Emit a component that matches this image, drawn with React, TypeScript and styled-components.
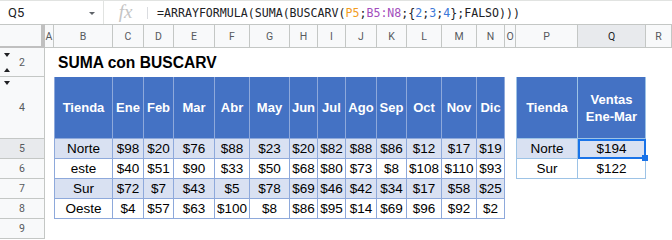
import React from 'react';
import styled, { createGlobalStyle, css } from 'styled-components';

const GlobalStyle = createGlobalStyle`
  html, body { margin: 0; padding: 0; background: #fff; overflow: hidden; }
  #root { width: 672px; height: 240px; }
`;

const COLS = [45, 9, 59, 31, 30, 41, 35, 40, 28, 28, 31, 30, 35, 35, 28, 11, 62, 68, 26];
const LETTERS = 'ABCDEFGHIJKLMNOPQR'.split('');
const MONTHS = ['Ene', 'Feb', 'Mar', 'Abr', 'May', 'Jun', 'Jul', 'Ago', 'Sep', 'Oct', 'Nov', 'Dic'];
const ROWS: [string, ...number[]][] = [
  ['Norte', 98, 20, 76, 88, 23, 20, 82, 88, 86, 12, 17, 19],
  ['este', 40, 51, 90, 33, 50, 68, 80, 73, 8, 108, 110, 93],
  ['Sur', 72, 7, 43, 5, 78, 69, 46, 42, 34, 17, 58, 25],
  ['Oeste', 4, 57, 63, 100, 8, 86, 95, 14, 69, 96, 92, 2],
];
const SUMMARY: [string, number][] = [
  ['Norte', 194],
  ['Sur', 122],
];

const MAIN_LINE = '#8ea9db';
const SIDE_LINE = '#9dc3e6';
const GRID_LINE = '#c4c7c5';

const Frame = styled.div`
  width: 672px;
  height: 240px;
  overflow: hidden;
  display: flex;
  flex-direction: column;
  font-family: Roboto, 'Liberation Sans', sans-serif;
  background: #fff;
`;

const FormulaBar = styled.div`
  flex: 0 0 24px;
  height: 24px;
  display: flex;
  align-items: center;
  box-sizing: border-box;
  border-top: 1px solid #e1e3e1;
`;

const NameBox = styled.div`
  width: 104px;
  height: 100%;
  box-sizing: border-box;
  display: flex;
  align-items: center;
  justify-content: space-between;
  padding: 0 8px 0 8px;
  border-right: 1px solid #e1e3e1;
  font-size: 13px;
  color: #202124;
`;

const Caret = styled.span`
  width: 0;
  height: 0;
  border-left: 3px solid transparent;
  border-right: 3px solid transparent;
  border-top: 3px solid #5f6368;
  margin-top: 2px;
`;

const FxBox = styled.div`
  width: 43px;
  height: 100%;
  display: flex;
  align-items: center;
  justify-content: center;
  font-family: 'Liberation Serif', serif;
  font-style: italic;
  font-size: 19px;
  color: #c4c4c4;
  padding-bottom: 2px;
  box-sizing: border-box;
`;

const Divider = styled.span`
  width: 1px;
  height: 12px;
  background: #dadce0;
`;

const Formula = styled.div`
  margin-left: 9px;
  font-family: 'DejaVu Sans Mono', 'Liberation Mono', monospace;
  font-size: 11.6px;
  color: #202124;
  white-space: nowrap;
`;

const Tok = styled.span<{ $c: string }>`
  color: ${(p) => p.$c};
`;

const Sheet = styled.div`
  display: grid;
  grid-template-columns: ${COLS.map((c) => `${c}px`).join(' ')};
  grid-template-rows: 24px 29px 62px repeat(5, 20px);
`;

const Corner = styled.div`
  background: #f8f9fa;
  box-sizing: border-box;
  border-top: 1px solid ${GRID_LINE};
  border-right: 4px solid #c0c0c0;
  border-bottom: 2px solid #c0c0c0;
`;

const ColHeader = styled.div<{ $active?: boolean }>`
  background: ${(p) => (p.$active ? '#e8eaed' : '#f8f9fa')};
  box-sizing: border-box;
  border-top: 1px solid ${GRID_LINE};
  border-right: 1px solid ${GRID_LINE};
  border-bottom: 1px solid ${GRID_LINE};
  display: flex;
  align-items: center;
  justify-content: center;
  font-size: 10.5px;
  color: ${(p) => (p.$active ? '#202124' : '#575a5e')};
  overflow: hidden;
`;

const RowHeader = styled.div<{ $active?: boolean }>`
  position: relative;
  background: ${(p) => (p.$active ? '#e8eaed' : '#f8f9fa')};
  box-sizing: border-box;
  border-right: 1px solid ${GRID_LINE};
  border-bottom: 1px solid ${GRID_LINE};
  display: flex;
  align-items: center;
  justify-content: center;
  font-size: 10.5px;
  color: #575a5e;
`;

const HiddenMark = styled.span<{ $up?: boolean; $top: number }>`
  position: absolute;
  left: 4px;
  top: ${(p) => p.$top}px;
  width: 0;
  height: 0;
  border-left: 3px solid transparent;
  border-right: 3px solid transparent;
  ${(p) =>
    p.$up
      ? css`border-bottom: 4px solid #202124;`
      : css`border-top: 4px solid #202124;`}
`;

const Blank = styled.div<{ $span?: number }>`
  grid-column: span ${(p) => p.$span ?? 1};
  background: #fff;
`;

const Title = styled.div`
  grid-column: span 17;
  display: flex;
  align-items: center;
  padding: 1px 0 0 4px;
  font-family: 'Liberation Sans', Arial, sans-serif;
  font-weight: 700;
  font-size: 15.6px;
  color: #000;
  white-space: nowrap;
`;

const HeadCell = styled.div<{ $line: string; $first?: boolean }>`
  background: #4472c4;
  box-sizing: border-box;
  border-right: 1px solid ${(p) => p.$line};
  border-bottom: 1px solid ${(p) => p.$line};
  ${(p) => p.$first && css`border-left: 1px solid ${p.$line};`}
  display: flex;
  align-items: center;
  justify-content: center;
  text-align: center;
  font-family: 'Liberation Sans', Arial, sans-serif;
  font-weight: 700;
  font-size: 13px;
  line-height: 17px;
  color: #fff;
  white-space: nowrap;
`;

const DataCell = styled.div<{ $line: string; $band?: boolean; $first?: boolean; $selected?: boolean }>`
  position: relative;
  background: ${(p) => (p.$band ? '#d9e1f2' : '#fff')};
  box-sizing: border-box;
  border-right: 1px solid ${(p) => p.$line};
  border-bottom: 1px solid ${(p) => p.$line};
  ${(p) => p.$first && css`border-left: 1px solid ${p.$line};`}
  display: flex;
  align-items: center;
  justify-content: center;
  font-family: 'Liberation Sans', Arial, sans-serif;
  font-size: 13.5px;
  color: #000;
  white-space: nowrap;
  ${(p) =>
    p.$selected &&
    css`
      &::after {
        content: '';
        position: absolute;
        top: 0;
        left: 0;
        right: -1px;
        bottom: -1px;
        border: 2px solid #1a73e8;
        z-index: 2;
      }
      &::before {
        content: '';
        position: absolute;
        right: -3px;
        bottom: -3px;
        width: 6px;
        height: 6px;
        background: #1a73e8;
        z-index: 3;
      }
    `}
`;

export default function App() {
  return (
    <>
      <GlobalStyle />
      <Frame>
        <FormulaBar>
          <NameBox>
            <span>Q5</span>
            <Caret />
          </NameBox>
          <FxBox>fx</FxBox>
          <Divider />
          <Formula>
            =ARRAYFORMULA(SUMA(BUSCARV(<Tok $c="#f29d1f">P5</Tok>;<Tok $c="#a24dbc">B5:N8</Tok>;{'{'}
            <Tok $c="#3c78d8">2</Tok>;<Tok $c="#3c78d8">3</Tok>;<Tok $c="#3c78d8">4</Tok>
            {'}'};FALSO)))
          </Formula>
        </FormulaBar>

        <Sheet>
          <Corner />
          {LETTERS.map((l) => (
            <ColHeader key={l} $active={l === 'Q'}>
              {l}
            </ColHeader>
          ))}

          <RowHeader>
            2
            <HiddenMark $top={5} />
            <HiddenMark $up $top={20} />
          </RowHeader>
          <Blank />
          <Title>SUMA con BUSCARV</Title>

          <RowHeader>
            4
            <HiddenMark $top={4} />
          </RowHeader>
          <Blank />
          <HeadCell $line={MAIN_LINE} $first>
            Tienda
          </HeadCell>
          {MONTHS.map((m) => (
            <HeadCell key={m} $line={MAIN_LINE}>
              {m}
            </HeadCell>
          ))}
          <Blank />
          <HeadCell $line={SIDE_LINE} $first>
            Tienda
          </HeadCell>
          <HeadCell $line={SIDE_LINE}>
            Ventas
            <br />
            Ene-Mar
          </HeadCell>
          <Blank />

          {ROWS.map(([name, ...vals], i) => {
            const band = i % 2 === 0;
            const side = SUMMARY[i];
            return (
              <React.Fragment key={name}>
                <RowHeader $active={i === 0}>{i + 5}</RowHeader>
                <Blank />
                <DataCell $line={MAIN_LINE} $band={band} $first>
                  {name}
                </DataCell>
                {vals.map((v, j) => (
                  <DataCell key={j} $line={MAIN_LINE} $band={band}>
                    ${v}
                  </DataCell>
                ))}
                <Blank />
                {side ? (
                  <>
                    <DataCell $line={SIDE_LINE} $band={band} $first>
                      {side[0]}
                    </DataCell>
                    <DataCell $line={SIDE_LINE} $band={band} $selected={i === 0}>
                      ${side[1]}
                    </DataCell>
                  </>
                ) : (
                  <Blank $span={2} />
                )}
                <Blank />
              </React.Fragment>
            );
          })}

          <RowHeader>9</RowHeader>
          <Blank $span={18} />
        </Sheet>
      </Frame>
    </>
  );
}
